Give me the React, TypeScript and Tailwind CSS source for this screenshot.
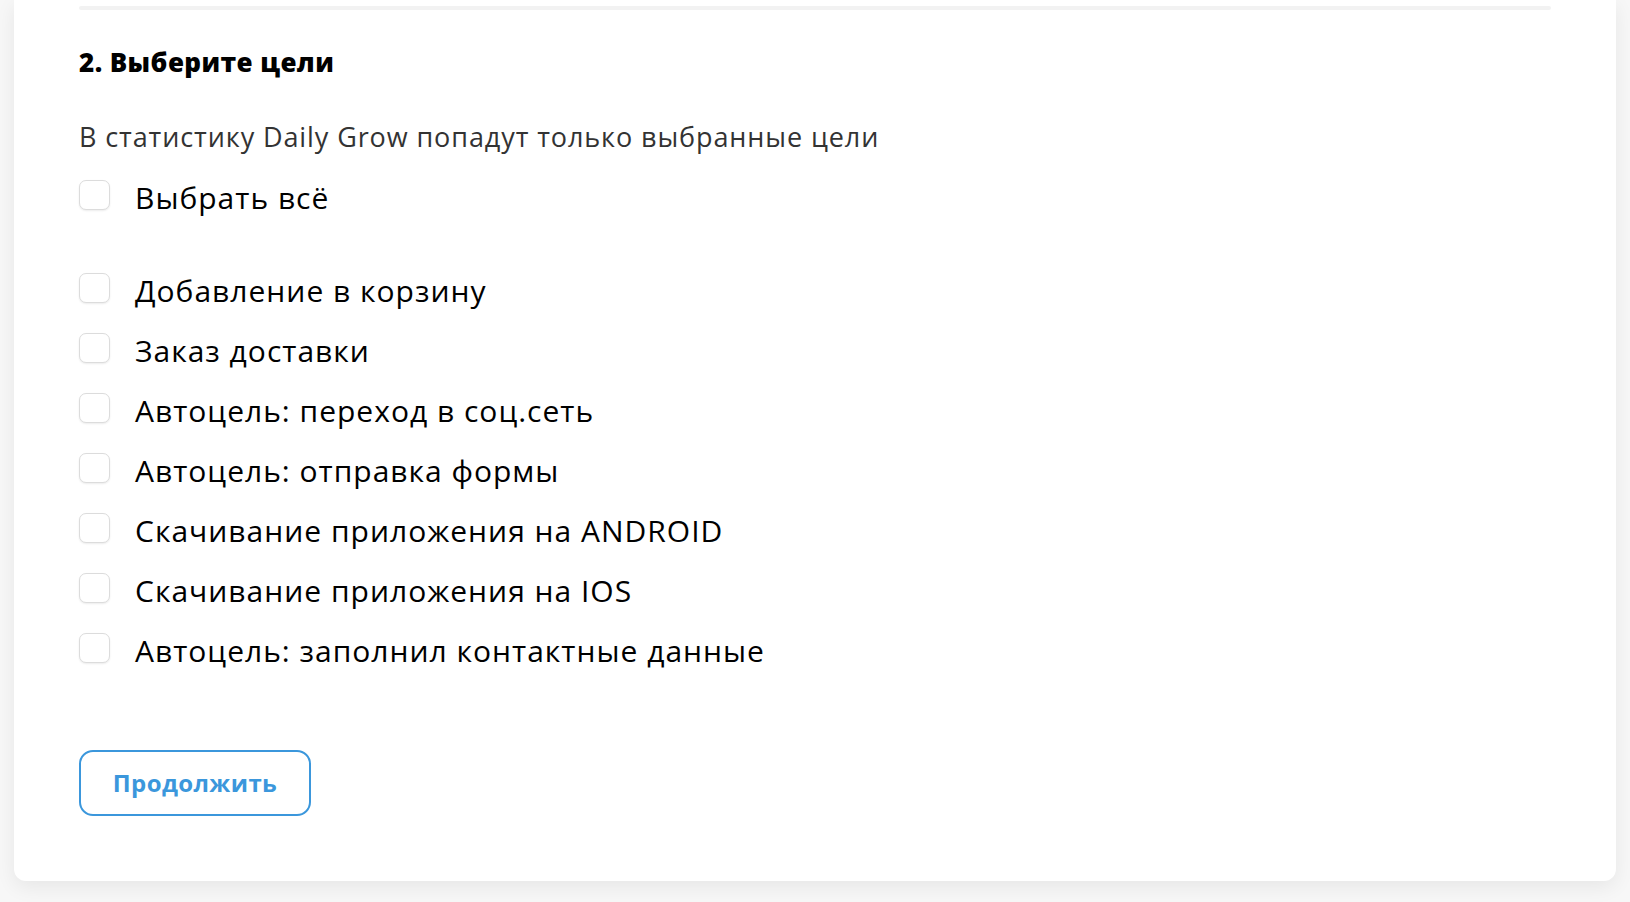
import { useState } from 'react';

const goals = [
  'Добавление в корзину',
  'Заказ доставки',
  'Автоцель: переход в соц.сеть',
  'Автоцель: отправка формы',
  'Скачивание приложения на ANDROID',
  'Скачивание приложения на IOS',
  'Автоцель: заполнил контактные данные',
];

function Checkbox({ checked, onChange }: { checked: boolean; onChange: () => void }) {
  return (
    <button
      type="button"
      onClick={onChange}
      className={
        'w-[31px] h-[30px] mb-[4px] shrink-0 rounded-[7px] border-[1.5px] shadow-[0_1px_2px_rgba(0,0,0,0.08)] ' +
        (checked ? 'bg-[#3b97dc] border-[#3b97dc]' : 'bg-white border-[#dcdcdc]')
      }
    />
  );
}

export default function App() {
  const [selected, setSelected] = useState<string[]>([]);
  const allChecked = selected.length === goals.length;

  const toggle = (g: string) =>
    setSelected(s => (s.includes(g) ? s.filter(x => x !== g) : [...s, g]));

  return (
    <div className="min-h-screen bg-[#f7f7f7] px-[14px] pb-[22px] font-['Open_Sans','Noto_Sans',sans-serif] text-black">
      <div className="bg-white rounded-b-[12px] shadow-[0_6px_20px_rgba(0,0,0,0.07)] px-[65px] pt-[6px] pb-[65px]">
        {/* divider from previous step */}
        <div className="h-[4px] bg-[#f2f2f2] rounded-full" />

        {/* Step 2 */}
        <h2 className="mt-[36px] text-[26px] leading-[32px] font-extrabold tracking-[0.4px]">2. Выберите цели</h2>
        <p className="mt-[43px] text-[27px] leading-[32px] tracking-[0.9px] text-[#333]">
          В статистику Daily Grow попадут только выбранные цели
        </p>

        <label className="mt-[14px] flex items-center gap-[25px] h-[60px] text-[30px] tracking-[1px] cursor-pointer">
          <Checkbox
            checked={allChecked}
            onChange={() => setSelected(allChecked ? [] : [...goals])}
          />
          <span>Выбрать всё</span>
        </label>

        <div className="mt-[33px] flex flex-col">
          {goals.map(g => (
            <label key={g} className="flex items-center gap-[25px] h-[60px] text-[30px] tracking-[1px] cursor-pointer">
              <Checkbox checked={selected.includes(g)} onChange={() => toggle(g)} />
              <span>{g}</span>
            </label>
          ))}
        </div>

        <button className="mt-[70px] w-[232px] h-[66px] rounded-[14px] border-2 border-[#3b97dc] text-[#3b97dc] text-[24px] font-bold tracking-[0.4px]">
          Продолжить
        </button>
      </div>
    </div>
  );
}
